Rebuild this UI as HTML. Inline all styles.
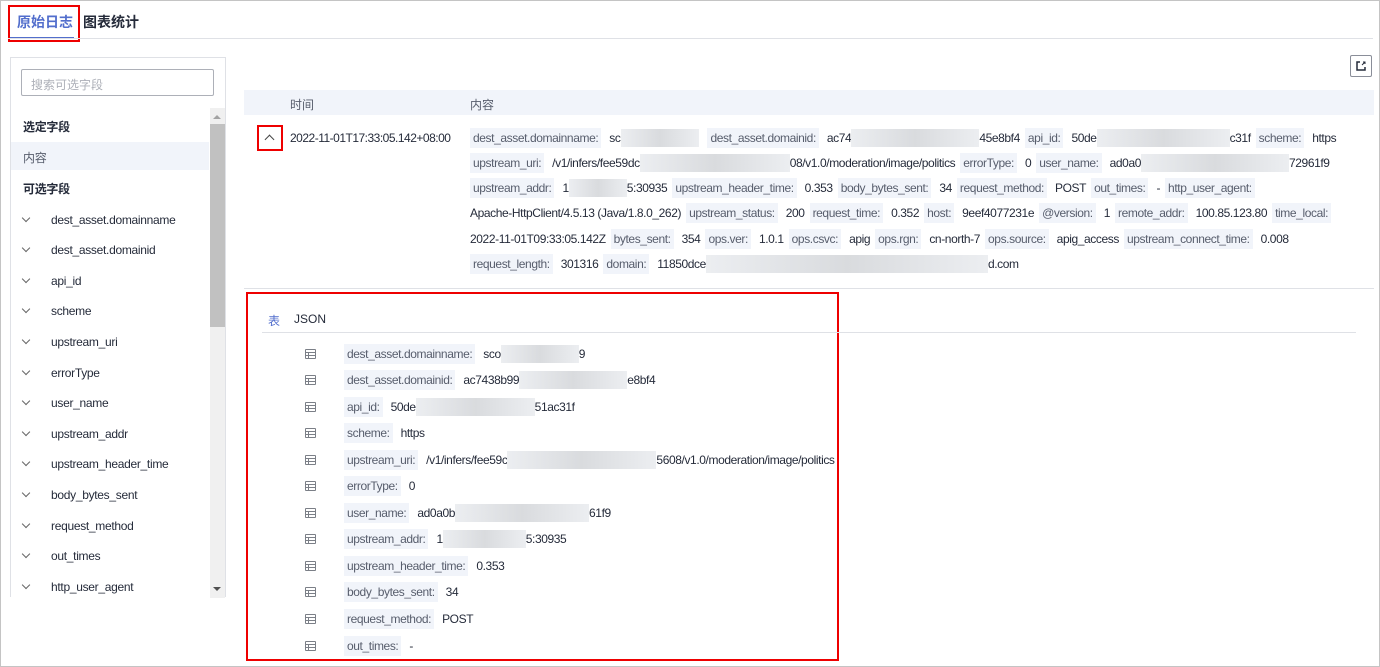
<!DOCTYPE html>
<html><head><meta charset="utf-8"><style>
*{box-sizing:border-box;margin:0;padding:0}
body{width:1380px;height:667px;overflow:hidden;font-family:"Liberation Sans","Noto Sans CJK SC",sans-serif;font-size:12px;color:#252b3a;background:#fff;position:relative}
.frame{position:absolute;left:0;top:0;width:1380px;height:667px;border:1px solid #c4c4c4}
.abs{position:absolute}
.tab{position:absolute;top:12px;font-size:14px;font-weight:bold}
.side{position:absolute;left:10px;top:57px;width:216px;height:540px;border:1px solid #dfe1e6;border-bottom:none}
.si{position:absolute;left:12px;font-size:12px;color:#252b3a;white-space:nowrap;letter-spacing:-0.3px}
.chev{display:inline-block;width:6px;height:6px;border-right:1px solid #666;border-bottom:1px solid #666;transform:rotate(45deg);margin-right:22px;position:relative;top:-3px}
.row{position:absolute;left:470px;display:flex;align-items:center;white-space:nowrap;height:20px;letter-spacing:-0.4px}
.k{background:#f1f4fa;color:#575d6c;padding:0 3px;height:20px;line-height:20px;margin-right:8px}
.v{margin-right:5px;color:#252b3a}
.blur{display:inline-block;height:18px;background:linear-gradient(90deg,#eceef1,#d9dbde,#eceef1)}
.d{position:absolute;left:344px;display:flex;align-items:center;white-space:nowrap;height:20px;letter-spacing:-0.4px}
.ic{position:absolute;left:305px;width:11px;height:10px;border:1px solid #7b7f87;border-radius:1px}
.ic:before{content:"";position:absolute;left:0;right:0;top:2px;height:2px;border-top:1px solid #7b7f87;border-bottom:1px solid #7b7f87}
.ic:after{content:"";position:absolute;left:2px;top:2px;bottom:0;border-left:1px solid #7b7f87}
</style></head><body>
<div class="frame"></div>
<div class="tab" style="left:17px;color:#526ecc">原始日志</div>
<div class="abs" style="left:10px;top:37px;width:64px;height:2px;background:#526ecc"></div>
<div class="abs" style="left:8px;top:5px;width:72px;height:37px;border:2px solid #e00"></div>
<div class="tab" style="left:83px;color:#252b3a">图表统计</div>
<div class="abs" style="left:8px;top:38px;width:1365px;height:1px;background:#dfe1e6"></div>

<div class="side">
<div class="abs" style="left:10px;top:11px;width:193px;height:27px;border:1px solid #adb0b8;border-radius:2px;color:#adb0b8;padding:6px 9px">搜索可选字段</div>
<div class="abs" style="left:199px;top:50px;width:15px;height:490px;background:#f0f0f0"></div>
<div class="abs" style="left:199px;top:66px;width:15px;height:203px;background:#c1c1c1"></div>
<div class="abs" style="left:202px;top:57px;border:4px solid transparent;border-bottom-color:#a3a3a3;border-top:none"></div>
<div class="abs" style="left:202px;top:529px;border:4px solid transparent;border-top-color:#505050;border-bottom:none"></div>
<div class="si" style="top:60px;font-weight:bold">选定字段</div>
<div class="abs" style="left:0;top:84px;width:198px;height:28px;background:#f1f4fa"></div>
<div class="si" style="top:91px;color:#575d6c">内容</div>
<div class="si" style="top:122px;font-weight:bold">可选字段</div>
<div class="si" style="top:155px"><span class="chev"></span>dest_asset.domainname</div>
<div class="si" style="top:185px"><span class="chev"></span>dest_asset.domainid</div>
<div class="si" style="top:216px"><span class="chev"></span>api_id</div>
<div class="si" style="top:246px"><span class="chev"></span>scheme</div>
<div class="si" style="top:277px"><span class="chev"></span>upstream_uri</div>
<div class="si" style="top:308px"><span class="chev"></span>errorType</div>
<div class="si" style="top:338px"><span class="chev"></span>user_name</div>
<div class="si" style="top:369px"><span class="chev"></span>upstream_addr</div>
<div class="si" style="top:399px"><span class="chev"></span>upstream_header_time</div>
<div class="si" style="top:430px"><span class="chev"></span>body_bytes_sent</div>
<div class="si" style="top:461px"><span class="chev"></span>request_method</div>
<div class="si" style="top:491px"><span class="chev"></span>out_times</div>
<div class="si" style="top:522px"><span class="chev"></span>http_user_agent</div>
</div>

<div class="abs" style="left:1350px;top:55px;width:22px;height:22px;border:1px solid #8a8e99;border-radius:2px">
<svg width="20" height="20" viewBox="0 0 20 20"><path d="M9 6H6v8h8v-3" fill="none" stroke="#252b3a" stroke-width="1.5"/><path d="M11 9l3-3M12 6h2v2" fill="none" stroke="#252b3a" stroke-width="1"/></svg></div>

<div class="abs" style="left:244px;top:90px;width:1130px;height:25px;background:#f1f4fa"></div>
<div class="abs" style="left:290px;top:96px;color:#575d6c">时间</div>
<div class="abs" style="left:470px;top:96px;color:#575d6c">内容</div>
<div class="abs" style="left:244px;top:288px;width:1130px;height:1px;background:#dfe1e6"></div>
<div class="abs" style="left:257px;top:125px;width:26px;height:26px;border:2px solid #e00"></div>
<div class="abs" style="left:266px;top:136px;width:7px;height:7px;border-left:1.5px solid #444;border-top:1.5px solid #444;transform:rotate(45deg)"></div>
<div class="abs" style="left:290px;top:131px;letter-spacing:-0.5px">2022-11-01T17:33:05.142+08:00</div>

<div class="row" style="top:128px"><span class="k">dest_asset.domainname:</span><span class="v">sc</span><span class="blur" style="width:78px;margin-right:8px;margin-left:-4px"></span><span class="k">dest_asset.domainid:</span><span class="v" style="margin-right:0">ac74</span><span class="blur" style="width:128px"></span><span class="v">45e8bf4</span><span class="k">api_id:</span><span class="v" style="margin-right:0">50de</span><span class="blur" style="width:133px"></span><span class="v">c31f</span><span class="k">scheme:</span><span class="v">https</span></div>
<div class="row" style="top:153px"><span class="k">upstream_uri:</span><span class="v" style="margin-right:0">/v1/infers/fee59dc</span><span class="blur" style="width:150px"></span><span class="v">08/v1.0/moderation/image/politics</span><span class="k">errorType:</span><span class="v">0</span><span class="k">user_name:</span><span class="v" style="margin-right:0">ad0a0</span><span class="blur" style="width:148px"></span><span class="v">72961f9</span></div>
<div class="row" style="top:178px"><span class="k">upstream_addr:</span><span class="v" style="margin-right:0">1</span><span class="blur" style="width:58px"></span><span class="v">5:30935</span><span class="k">upstream_header_time:</span><span class="v">0.353</span><span class="k">body_bytes_sent:</span><span class="v">34</span><span class="k">request_method:</span><span class="v">POST</span><span class="k">out_times:</span><span class="v">-</span><span class="k">http_user_agent:</span></div>
<div class="row" style="top:203px"><span class="v">Apache-HttpClient/4.5.13 (Java/1.8.0_262)</span><span class="k">upstream_status:</span><span class="v">200</span><span class="k">request_time:</span><span class="v">0.352</span><span class="k">host:</span><span class="v">9eef4077231e</span><span class="k">@version:</span><span class="v">1</span><span class="k">remote_addr:</span><span class="v">100.85.123.80</span><span class="k">time_local:</span></div>
<div class="row" style="top:229px"><span class="v">2022-11-01T09:33:05.142Z</span><span class="k">bytes_sent:</span><span class="v">354</span><span class="k">ops.ver:</span><span class="v">1.0.1</span><span class="k">ops.csvc:</span><span class="v">apig</span><span class="k">ops.rgn:</span><span class="v">cn-north-7</span><span class="k">ops.source:</span><span class="v">apig_access</span><span class="k">upstream_connect_time:</span><span class="v">0.008</span></div>
<div class="row" style="top:254px"><span class="k">request_length:</span><span class="v">301316</span><span class="k">domain:</span><span class="v" style="margin-right:0">11850dce</span><span class="blur" style="width:282px"></span><span class="v">d.com</span></div>

<div class="abs" style="left:246px;top:292px;width:593px;height:369px;border:2px solid #e00"></div>
<div class="abs" style="left:268px;top:312px;color:#526ecc">表</div>
<div class="abs" style="left:294px;top:312px;color:#252b3a">JSON</div>
<div class="abs" style="left:262px;top:332px;width:1094px;height:1px;background:#dfe1e6"></div>

<div class="ic" style="top:349px"></div><div class="d" style="top:344px"><span class="k">dest_asset.domainname:</span><span class="v" style="margin-right:0">sco</span><span class="blur" style="width:78px"></span><span class="v">9</span></div>
<div class="ic" style="top:375px"></div><div class="d" style="top:370px"><span class="k">dest_asset.domainid:</span><span class="v" style="margin-right:0">ac7438b99</span><span class="blur" style="width:108px"></span><span class="v">e8bf4</span></div>
<div class="ic" style="top:402px"></div><div class="d" style="top:397px"><span class="k">api_id:</span><span class="v" style="margin-right:0">50de</span><span class="blur" style="width:119px"></span><span class="v">51ac31f</span></div>
<div class="ic" style="top:428px"></div><div class="d" style="top:423px"><span class="k">scheme:</span><span class="v">https</span></div>
<div class="ic" style="top:455px"></div><div class="d" style="top:450px"><span class="k">upstream_uri:</span><span class="v" style="margin-right:0">/v1/infers/fee59c</span><span class="blur" style="width:149px"></span><span class="v">5608/v1.0/moderation/image/politics</span></div>
<div class="ic" style="top:481px"></div><div class="d" style="top:476px"><span class="k">errorType:</span><span class="v">0</span></div>
<div class="ic" style="top:508px"></div><div class="d" style="top:503px"><span class="k">user_name:</span><span class="v" style="margin-right:0">ad0a0b</span><span class="blur" style="width:134px"></span><span class="v">61f9</span></div>
<div class="ic" style="top:534px"></div><div class="d" style="top:529px"><span class="k">upstream_addr:</span><span class="v" style="margin-right:0">1</span><span class="blur" style="width:83px"></span><span class="v">5:30935</span></div>
<div class="ic" style="top:561px"></div><div class="d" style="top:556px"><span class="k">upstream_header_time:</span><span class="v">0.353</span></div>
<div class="ic" style="top:587px"></div><div class="d" style="top:582px"><span class="k">body_bytes_sent:</span><span class="v">34</span></div>
<div class="ic" style="top:614px"></div><div class="d" style="top:609px"><span class="k">request_method:</span><span class="v">POST</span></div>
<div class="ic" style="top:641px"></div><div class="d" style="top:636px"><span class="k">out_times:</span><span class="v">-</span></div>
</body></html>
